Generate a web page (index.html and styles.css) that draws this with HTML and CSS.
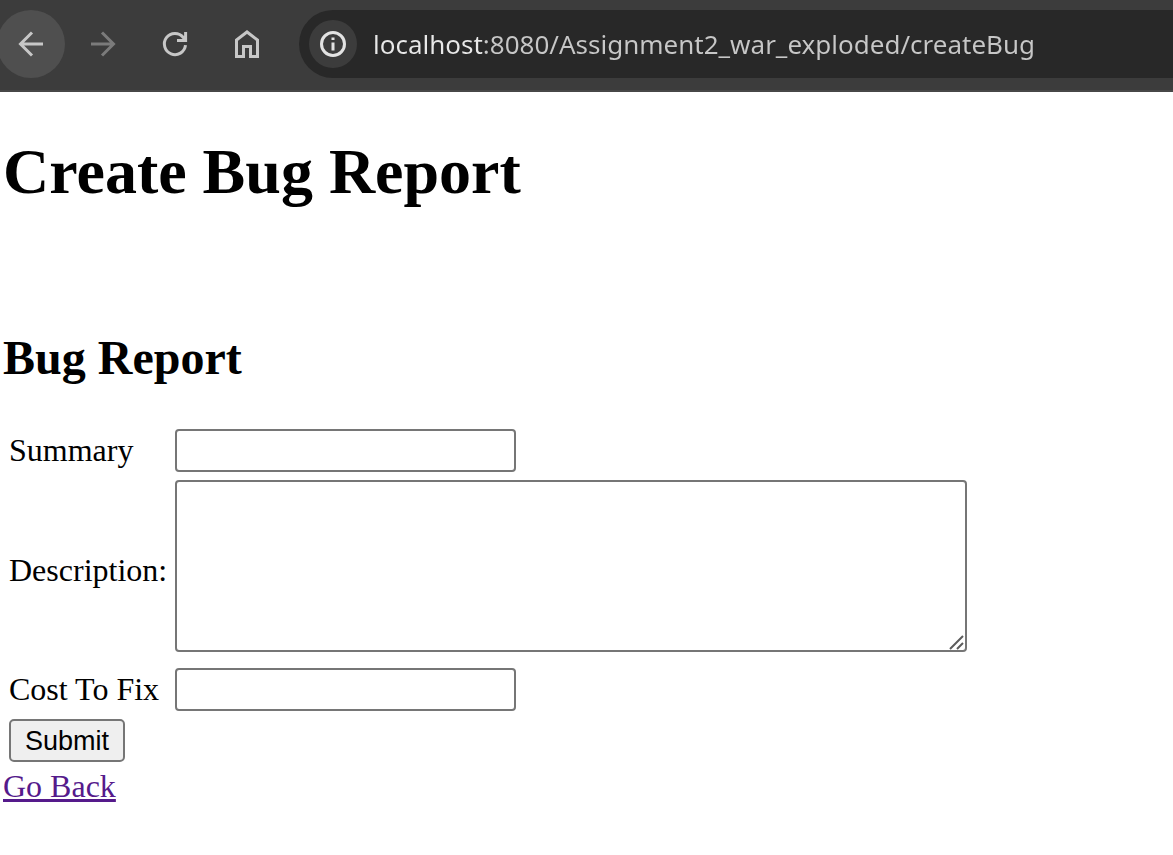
FILE: index.html
```html
<!DOCTYPE html>
<html lang="en">
<head>
<meta charset="utf-8">
<meta name="viewport" content="width=device-width, initial-scale=1">
<title>Create Bug Report</title>
<link rel="stylesheet" href="styles.css">
</head>
<body>
<header class="toolbar">
  <nav class="nav-buttons" aria-label="Browser navigation">
    <button class="nav-button nav-button-active" type="button" aria-label="Back">
      <svg class="icon" viewBox="0 0 32 32"><path d="M28 16H6M17 4.500L5.500 16L17 27.500"/></svg>
    </button>
    <button class="nav-button nav-button-dim" type="button" aria-label="Forward">
      <svg class="icon" viewBox="0 0 32 32"><path d="M4 16H26M15 4.500L26.500 16L15 27.500"/></svg>
    </button>
    <button class="nav-button" type="button" aria-label="Reload">
      <svg class="icon" viewBox="0 0 32 32"><path d="M26.500 17.200A10.600 10.600 0 1 1 24.300 9.500L26 12M26.600 4V12.600H18"/></svg>
    </button>
    <button class="nav-button" type="button" aria-label="Home">
      <svg class="icon" viewBox="0 0 32 32"><path d="M5.500 28.500V12L16 4L26.500 12V28.500H19.500V18.500H12.500V28.500Z"/></svg>
    </button>
  </nav>
  <div class="address-bar">
    <button class="site-info" type="button" aria-label="View site information">
      <svg class="icon" viewBox="0 0 32 32"><circle cx="16" cy="16" r="11.500"/><path d="M16 14.500V22.500M16 9.500V12"/></svg>
    </button>
    <input class="address" type="text" aria-label="Address" spellcheck="false" value="localhost:8080/Assignment2_war_exploded/createBug">
  </div>
</header>
<main class="page">
  <h1 class="title">Create Bug Report</h1>
  <h2 class="subtitle">Bug Report</h2>
  <form class="bug-form">
    <table class="form-table">
      <tr>
        <td><label for="summary">Summary</label></td>
        <td><input class="field" id="summary" type="text"></td>
      </tr>
      <tr>
        <td><label for="description">Description:</label></td>
        <td>
          <div class="area-wrap">
            <textarea class="field area" id="description"></textarea>
            <svg class="grip" viewBox="0 0 16 16" aria-hidden="true"><path d="M1 15L14 2M8 15L14 9"/></svg>
          </div>
        </td>
      </tr>
      <tr>
        <td><label for="cost">Cost To Fix</label></td>
        <td><input class="field" id="cost" type="text"></td>
      </tr>
      <tr>
        <td colspan="2"><button class="submit" type="submit">Submit</button></td>
      </tr>
    </table>
  </form>
  <a class="back-link" href="#">Go Back</a>
</main>
</body>
</html>
```
FILE: styles.css
```css
* {
  box-sizing: border-box;
}

body {
  margin: 0;
  background: #fff;
  color: #000;
  font-family: "Liberation Serif", "Times New Roman", serif;
  font-size: 32px;
  overflow-x: hidden;
}

.toolbar {
  display: flex;
  align-items: center;
  gap: 18px;
  padding: 10px 0 14px;
  background: #3c3c3c;
  box-shadow: inset 0 -2px #474747;
}

.nav-buttons {
  display: flex;
  flex: none;
  gap: 4px;
  margin-left: -3px;
}

.nav-button,
.site-info {
  display: grid;
  place-items: center;
  flex: none;
  padding: 0;
  border: 0;
  border-radius: 50%;
  background: none;
  color: #c7c7c7;
}

.nav-button {
  width: 68px;
  height: 68px;
}

.nav-button-active {
  background: #4f4f4f;
}

.nav-button-dim {
  color: #7b7b7b;
}

.icon {
  width: 32px;
  height: 32px;
  fill: none;
  stroke: currentColor;
  stroke-width: 3;
}

.address-bar {
  display: flex;
  flex: 1;
  align-items: center;
  gap: 16px;
  min-width: 0;
  height: 68px;
  padding-left: 10px;
  border-radius: 34px 0 0 34px;
  background: #282828;
}

.site-info {
  width: 48px;
  height: 48px;
  background: #3c3c3c;
  color: #e3e3e3;
}

.address {
  flex: 1;
  min-width: 0;
  padding: 0;
  border: 0;
  outline: 0;
  background: linear-gradient(to right, #e8e8e8 110px, #c7c7c7 110px);
  background-clip: text;
  -webkit-background-clip: text;
  -webkit-text-fill-color: transparent;
  color: #c7c7c7;
  font-family: "Noto Sans", "Segoe UI", sans-serif;
  font-size: 26px;
  line-height: 40px;
}

.page {
  padding: 43px 3px 40px;
}

.title {
  margin: 0 0 121px;
  font-size: 64px;
  line-height: 74px;
}

.subtitle {
  margin: 0 0 38px;
  font-size: 48px;
  line-height: 55px;
}

.form-table {
  border-spacing: 4px;
}

.form-table td {
  padding: 2px;
}

.field {
  display: block;
  width: 341px;
  height: 43px;
  padding: 2px 4px;
  border: 2px solid #767676;
  border-radius: 4px;
  background: #fff;
  font-family: "Liberation Sans", Arial, sans-serif;
  font-size: 27px;
}

.area-wrap {
  position: relative;
  margin-bottom: 8px;
}

.area {
  width: 792px;
  height: 172px;
  resize: none;
}

.grip {
  position: absolute;
  right: 2px;
  bottom: 2px;
  width: 16px;
  height: 16px;
  fill: none;
  stroke: #5c5c5c;
  stroke-width: 2;
  pointer-events: none;
}

.submit {
  display: block;
  height: 43px;
  padding: 0 14px;
  border: 2px solid #767676;
  border-radius: 5px;
  background: #efefef;
  color: #000;
  font-family: "Liberation Sans", Arial, sans-serif;
  font-size: 27px;
  line-height: 36px;
}

.back-link {
  color: #551a8b;
  text-decoration-thickness: 3px;
}
```
